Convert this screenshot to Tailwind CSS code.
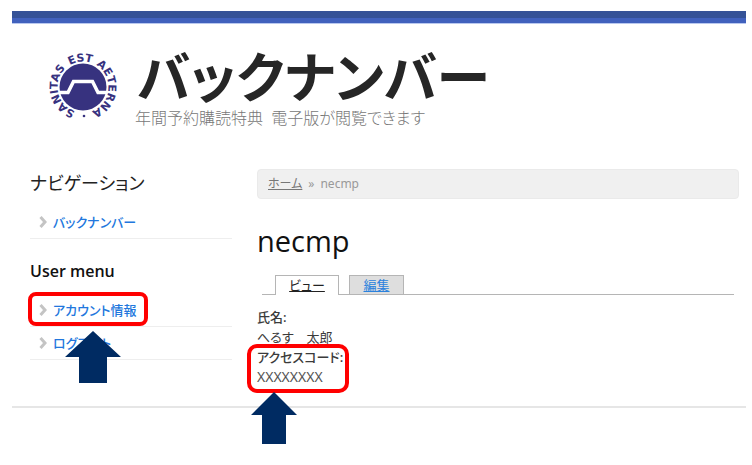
<!DOCTYPE html>
<html lang="ja">
<head>
  <meta charset="UTF-8" />
  <meta name="viewport" content="width=device-width, initial-scale=1.0" />
  <title>バックナンバー</title>
  <script src="https://cdn.jsdelivr.net/npm/@tailwindcss/browser@4"></script>
</head>
<body class="min-h-screen bg-white pt-[11px] pr-1.5 pb-14 pl-3 font-['Noto_Sans','Noto_Sans_CJK_JP',sans-serif] text-[#3b3b3b] [font-feature-settings:'palt']">

  <div class="border-b-2 border-[#e6e6e6] pb-[19px]">
    <!-- Top bar -->
    <div class="h-[13px] border-b border-[#b9c8ef] bg-linear-to-b from-[#355297] from-60% to-[#4161bd] to-60%"></div>

    <header class="flex pt-6 pl-8">
      <svg class="h-[78px] w-[78px] shrink-0 overflow-visible" viewBox="-39 -39 78 78" role="img" aria-label="Sanitas est aeterna">
        <defs>
          <path id="ring" d="M0 25.500 A25.500 25.500 0 0 1 0 -25.500 A25.500 25.500 0 0 1 0 25.500" />
        </defs>
        <circle r="23.500" fill="#37327f" />
        <path d="M-25 5.500 H-15 L-9.500 -5.500 H9.500 L15 5.500 H25" fill="none" stroke="#fff" stroke-width="3.500" />
        <g fill="#37327f" text-anchor="middle" class="font-['DejaVu_Sans'] text-[11px] font-bold">
          <text><textPath href="#ring" startOffset="21.500%">SANITAS</textPath></text>
          <text><textPath href="#ring" startOffset="48.500%">EST</textPath></text>
          <text><textPath href="#ring" startOffset="76.500%">AETERNA</textPath></text>
        </g>
        <circle cx="1" cy="29" r="1.300" fill="#37327f" />
      </svg>
      <div class="ml-[13px]">
        <h1 class="pl-0.5 text-[54px] leading-[58px] font-bold text-[#262626]">バックナンバー</h1>
        <p class="text-base leading-6 font-light text-[#777]">年間予約購読特典&nbsp; 電子版が閲覧できます</p>
      </div>
    </header>

    <div class="mt-[39px] flex gap-[25px] pr-[7px] pl-[18px]">
      <!-- Sidebar -->
      <aside class="w-[202px] shrink-0">
        <h2 class="text-lg leading-7 text-[#222]">ナビゲーション</h2>
        <ul class="mt-2">
          <li class="flex h-[34px] items-center gap-1.5 border-b border-[#eee] pl-[9px]">
            <svg class="h-3 w-2" viewBox="0 0 8 12" fill="none" stroke="#c4c4c4" stroke-width="3"><path d="M1.500 1 L6 6 L1.500 11" /></svg>
            <a href="#" class="text-[13px] leading-5 font-medium text-[#2277dd]">バックナンバー</a>
          </li>
        </ul>
        <h2 class="mt-[18px] font-['Open_Sans'] text-base leading-7 font-semibold text-[#111]">User menu</h2>
        <ul class="mt-2">
          <li class="relative flex h-[34px] items-center gap-1.5 border-b border-[#eee] pl-[9px]">
            <svg class="h-3 w-2" viewBox="0 0 8 12" fill="none" stroke="#c4c4c4" stroke-width="3"><path d="M1.500 1 L6 6 L1.500 11" /></svg>
            <a href="#" class="text-[13px] leading-5 font-medium text-[#2277dd]">アカウント情報</a>
            <span class="absolute -top-px -left-0.5 h-[34px] w-[120px] rounded-lg border-4 border-[#ff0000]"></span>
            <svg class="absolute top-[38px] left-[35px] z-10 h-[52px] w-14" viewBox="0 0 56 52" fill="#002b62"><path d="M28 0 L56 26 H42 V52 H14 V26 H0 Z" /></svg>
          </li>
          <li class="flex h-[33px] items-center gap-1.5 border-b border-[#eee] pl-[9px]">
            <svg class="h-3 w-2" viewBox="0 0 8 12" fill="none" stroke="#c4c4c4" stroke-width="3"><path d="M1.500 1 L6 6 L1.500 11" /></svg>
            <a href="#" class="text-[13px] leading-5 font-medium text-[#2277dd]">ログアウト</a>
          </li>
        </ul>
      </aside>

      <!-- Content -->
      <main class="min-w-0 flex-1">
        <nav class="flex h-[30px] items-center gap-1.5 rounded border border-[#eaeaea] bg-[#f0f0f0] px-2.5 text-xs text-[#999]">
          <a href="#" class="text-[#777] underline">ホーム</a>
          <span>»</span>
          <span>necmp</span>
        </nav>

        <h1 class="mt-6 font-['Open_Sans'] text-[29px] leading-9 text-[#111]">necmp</h1>

        <div class="mt-4 mr-[5px] ml-[5px] flex gap-2.5 border-b border-[#b5b5b5] pl-[13px] text-[13px] leading-[18px]">
          <a href="#" class="-mb-px w-16 border border-b-0 border-[#b5b5b5] bg-white text-center text-[#222] underline">ビュー</a>
          <a href="#" class="w-[55px] border border-b-0 border-[#b5b5b5] bg-[#dedede] text-center text-[#2b82dd] underline">編集</a>
        </div>

        <dl class="mt-3 text-[13px] leading-5">
          <dt class="font-medium">氏名:</dt>
          <dd>へるす　太郎</dd>
          <div class="relative">
            <dt class="font-medium">アクセスコード:</dt>
            <dd class="text-sm leading-5 text-[#555]">XXXXXXXX</dd>
            <span class="absolute -top-[3px] -left-2.5 h-[49px] w-[102px] rounded-[10px] border-4 border-[#ff0000]"></span>
            <svg class="absolute top-[45px] -left-1.5 h-[52px] w-[46px]" viewBox="0 0 46 52" fill="#002b62"><path d="M23 0 L46 23 H35 V52 H11 V23 H0 Z" /></svg>
          </div>
        </dl>
      </main>
    </div>
  </div>

</body>
</html>
